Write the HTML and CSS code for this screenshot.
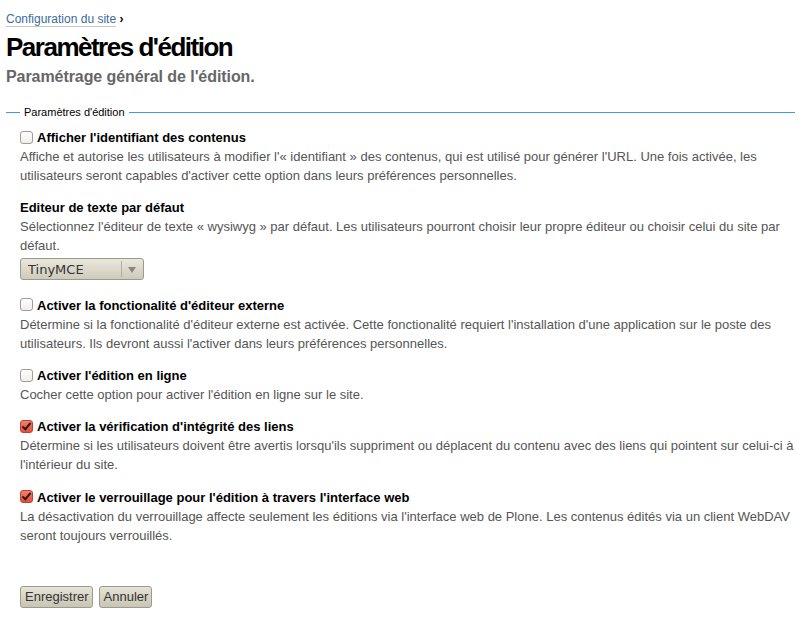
FILE: index.html
```html
<!DOCTYPE html>
<html lang="fr">
<head>
<meta charset="utf-8">
<title>Paramètres d'édition</title>
<link rel="stylesheet" href="styles.css">
</head>
<body>
<div class="breadcrumb"><a href="#">Configuration du site</a> <span class="sep">›</span></div>
<h1 class="title">Paramètres d'édition</h1>
<p class="subtitle">Paramétrage général de l'édition.</p>

<form class="form">
  <fieldset class="fs">
    <legend class="legend">Paramètres d'édition</legend>

    <div class="field">
      <label class="label"><input type="checkbox" class="cb"> Afficher l'identifiant des contenus</label>
      <div class="help">Affiche et autorise les utilisateurs à modifier l'« identifiant » des contenus, qui est utilisé pour générer l'URL. Une fois activée, les utilisateurs seront capables d'activer cette option dans leurs préférences personnelles.</div>
    </div>

    <div class="field">
      <label class="label">Editeur de texte par défaut</label>
      <div class="help">Sélectionnez l'éditeur de texte « wysiwyg » par défaut. Les utilisateurs pourront choisir leur propre éditeur ou choisir celui du site par défaut.</div>
      <div class="select-wrap"><select class="select"><option>TinyMCE</option></select></div>
    </div>

    <div class="field">
      <label class="label"><input type="checkbox" class="cb"> Activer la fonctionalité d'éditeur externe</label>
      <div class="help">Détermine si la fonctionalité d'éditeur externe est activée. Cette fonctionalité requiert l'installation d'une application sur le poste des utilisateurs. Ils devront aussi l'activer dans leurs préférences personnelles.</div>
    </div>

    <div class="field">
      <label class="label"><input type="checkbox" class="cb"> Activer l'édition en ligne</label>
      <div class="help">Cocher cette option pour activer l'édition en ligne sur le site.</div>
    </div>

    <div class="field">
      <label class="label"><input type="checkbox" class="cb" checked> Activer la vérification d'intégrité des liens</label>
      <div class="help">Détermine si les utilisateurs doivent être avertis lorsqu'ils suppriment ou déplacent du contenu avec des liens qui pointent sur celui-ci à l'intérieur du site.</div>
    </div>

    <div class="field">
      <label class="label"><input type="checkbox" class="cb" checked> Activer le verrouillage pour l'édition à travers l'interface web</label>
      <div class="help">La désactivation du verrouillage affecte seulement les éditions via l'interface web de Plone. Les contenus édités via un client WebDAV seront toujours verrouillés.</div>
    </div>
  </fieldset>

  <div class="actions">
    <button type="button" class="btn">Enregistrer</button>
    <button type="button" class="btn">Annuler</button>
  </div>
</form>
</body>
</html>
```

FILE: styles.css
```css
html, body {
  margin: 0;
  background: #fff;
}

body {
  padding: 11px 4px 0 6px;
  font-family: "Liberation Sans", Arial, sans-serif;
  color: #000;
}

.breadcrumb {
  font-size: 12px;
  line-height: 16px;
  color: #000;
}

.breadcrumb a {
  color: #3a6c9c;
  text-decoration: none;
  border-bottom: 1px solid #c8c8c8;
}

.breadcrumb .sep {
  font-weight: bold;
}

.title {
  margin: 5px 0 0;
  font-size: 26px;
  line-height: 30px;
  font-weight: bold;
  letter-spacing: -1.5px;
}

.subtitle {
  margin: 5px 0 0;
  font-size: 16px;
  line-height: 20px;
  font-weight: bold;
  color: #666;
  letter-spacing: -0.07px;
}

.form {
  margin: 0;
}

.fs {
  margin: 19px 0 0;
  padding: 9px 0 0 14px;
  border: 0;
  border-top: 1px solid #3d9fd6;
  min-width: 0;
}

.legend {
  margin-left: 0;
  padding: 0 4px;
  font-size: 11px;
  line-height: 13px;
  color: #000;
}

.field {
  margin-bottom: 13.3px;
}

.label {
  display: flex;
  align-items: center;
  font-size: 13px;
  line-height: 19px;
  font-weight: bold;
}

.cb {
  appearance: none;
  -webkit-appearance: none;
  width: 13px;
  height: 13px;
  margin: 0 4px 1px 0;
  border: 1px solid #a09e96;
  border-radius: 3px;
  background: linear-gradient(#fdfdfc, #efeeea);
  box-sizing: border-box;
  position: relative;
  flex: none;
}

.cb:checked {
  border-color: #c2402f;
  background: linear-gradient(#f47e6c, #e0503c);
}

.cb:checked::after {
  content: "";
  position: absolute;
  left: 3px;
  top: 0px;
  width: 3px;
  height: 7px;
  border: solid #2b1a18;
  border-width: 0 2px 2px 0;
  transform: rotate(40deg);
}

.help {
  font-size: 13px;
  line-height: 19px;
  color: #555;
}

.select-wrap {
  width: 124px;
  position: relative;
  margin: 3px 0 15.5px;
}

.select {
  appearance: none;
  -webkit-appearance: none;
  display: block;
  width: 124px;
  height: 22px;
  margin: 0;
  padding: 0 0 0 7px;
  font-family: "DejaVu Sans", sans-serif;
  font-size: 13px;
  color: #333;
  border: 1px solid #9d9a8c;
  border-radius: 3px;
  background: linear-gradient(#e9e7dc, #cfcbbb);
}

.select-wrap::after {
  content: "";
  position: absolute;
  right: 22px;
  top: 3px;
  bottom: 3px;
  border-left: 1px solid #b3af9f;
}

.select-wrap::before {
  content: "";
  position: absolute;
  right: 8px;
  top: 9px;
  border-left: 4px solid transparent;
  border-right: 4px solid transparent;
  border-top: 6px solid #8a877c;
  z-index: 1;
}

.actions {
  display: flex;
  gap: 6px;
  padding: 28px 0 0 14px;
}

.btn {
  height: 22px;
  margin: 0;
  padding: 0 3px 0 4px;
  font-family: "Liberation Sans", Arial, sans-serif;
  font-size: 13px;
  color: #333;
  border: 1px solid #9d9a8c;
  border-radius: 3px;
  background: linear-gradient(#e6e3d7, #c9c5b4);
}
```
